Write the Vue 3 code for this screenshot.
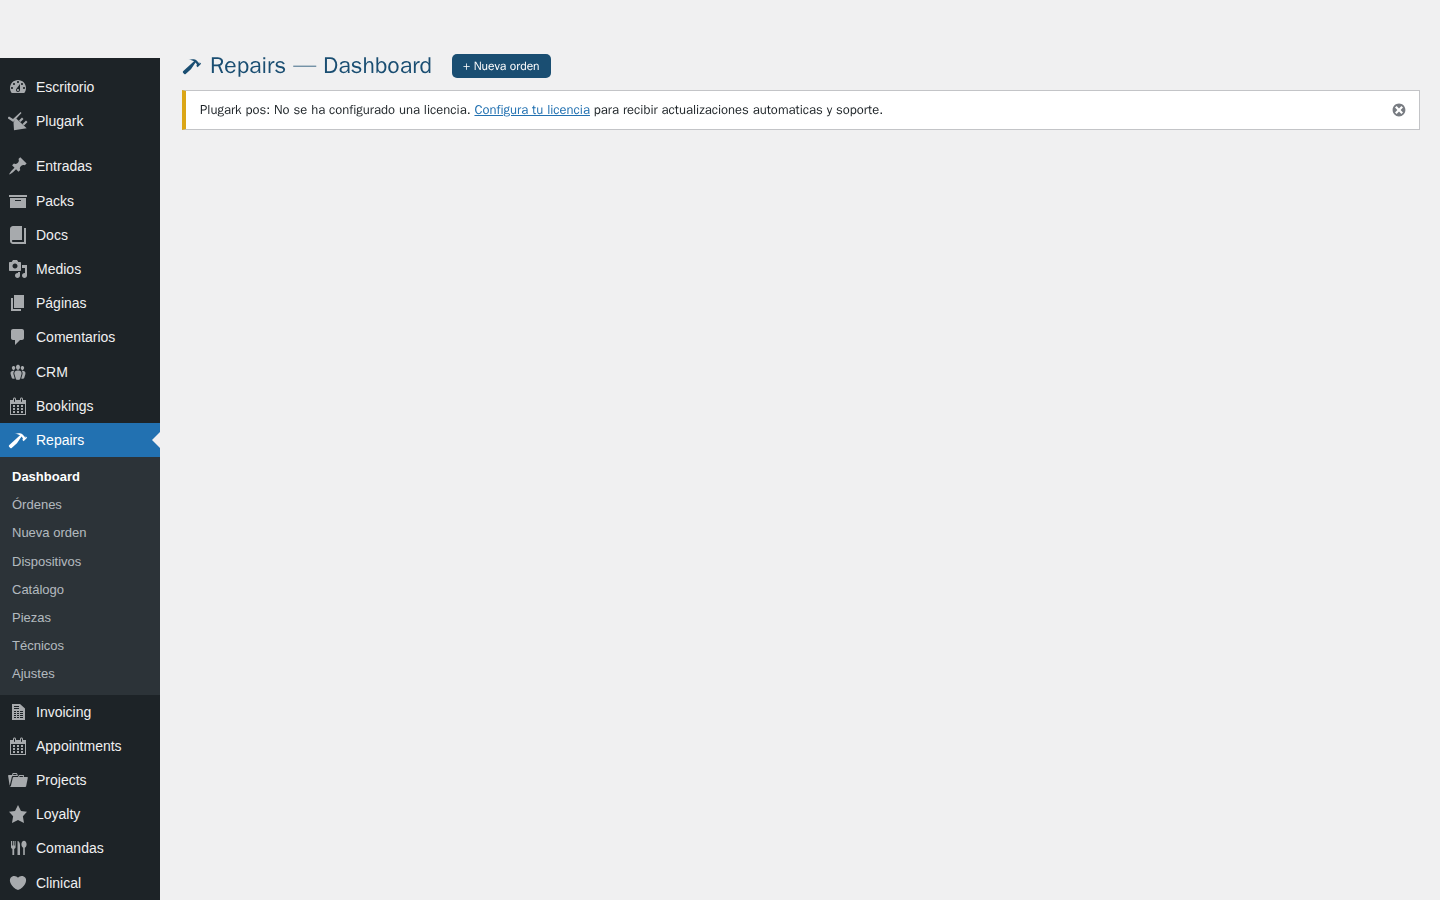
<script setup>
const P = {
  dash: 'M3.76 16h12.48c1.1-1.37 1.76-3.11 1.76-5 0-4.42-3.58-8-8-8s-8 3.58-8 8c0 1.89.66 3.63 1.76 5zM10 4c.55 0 1 .45 1 1s-.45 1-1 1-1-.45-1-1 .45-1 1-1zM6 6c.55 0 1 .45 1 1s-.45 1-1 1-1-.45-1-1 .45-1 1-1zm8 0c.55 0 1 .45 1 1s-.45 1-1 1-1-.45-1-1 .45-1 1-1zm-5.37 5.55L12 7v6c0 1.1-.9 2-2 2s-2-.9-2-2c0-.57.24-1.08.63-1.45zM4 10c.55 0 1 .45 1 1s-.45 1-1 1-1-.45-1-1 .45-1 1-1zm12 0c.55 0 1 .45 1 1s-.45 1-1 1-1-.45-1-1 .45-1 1-1zm-5 3c0-.55-.45-1-1-1s-1 .45-1 1 .45 1 1 1 1-.45 1-1z',
  plug: 'M0 6.500l1-1 4 2.600L12.600 1l.9.900-8.300 9.200L0 7.500zM8 7.300L18.700 17.300 6 19.300 5.500 11.500zM11 9.500l3-3 1.500 1.500-3 3zM14.500 13l3.500-3.500 1.500 1.500-3.500 3.500z',
  pin: 'M10.44 3.02l1.82-1.82 6.36 6.35-1.83 1.82c-1.05-.68-2.48-.57-3.41.36l-.75.75c-.92.93-1.04 2.35-.35 3.41l-1.83 1.82-2.41-2.41-2.8 2.79c-.42.42-3.38 2.71-3.8 2.29s1.86-3.39 2.28-3.81l2.79-2.79L4.1 9.36l1.83-1.82c1.05.69 2.48.57 3.4-.36l.75-.75c.93-.92 1.05-2.35.36-3.41z',
  archive: 'M19 4v2H1V4h18zM2 7h16v10H2V7zm11 3V9H7v1h6z',
  book: 'M16 3h2v16H5c-1.66 0-3-1.34-3-3V4c0-1.66 1.34-3 3-3h9v14H5c-.55 0-1 .45-1 1s.45 1 1 1h11V3z',
  media: 'M13 11V4c0-.55-.45-1-1-1h-1.67L9 1H5L3.67 3H2c-.55 0-1 .45-1 1v7c0 .55.45 1 1 1h10c.55 0 1-.45 1-1zM7 4.5c1.38 0 2.5 1.12 2.5 2.5S8.38 9.5 7 9.5 4.5 8.38 4.5 7 5.62 4.5 7 4.5zM14 6h5v10.5c0 1.38-1.12 2.5-2.5 2.5S14 17.88 14 16.5s1.12-2.5 2.5-2.5c.17 0 .34.02.5.05V9h-3V6zm-4 8.05V13h2v3.5c0 1.38-1.12 2.5-2.5 2.5S7 17.88 7 16.5 8.12 14 9.5 14c.17 0 .34.02.5.05z',
  page: 'M6 15V2h10v13H6zm-1 1h8v2H3V5h2v11z',
  comment: 'M5 2h9c1.1 0 2 .9 2 2v7c0 1.1-.9 2-2 2h-2l-5 5v-5H5c-1.1 0-2-.9-2-2V4c0-1.1.9-2 2-2z',
  groups: 'M8.03 4.46c-.29 1.28.55 3.46 1.97 3.46 1.41 0 2.25-2.18 1.96-3.46-.22-.98-1.08-1.63-1.96-1.63-.89 0-1.74.65-1.97 1.63zm-4.13.9c-.25 1.08.47 2.93 1.67 2.93s1.92-1.85 1.67-2.93c-.19-.83-.92-1.39-1.67-1.39s-1.48.56-1.67 1.39zm8.86 0c-.25 1.08.47 2.93 1.66 2.93 1.2 0 1.92-1.85 1.67-2.93-.19-.83-.92-1.39-1.67-1.39-.74 0-1.47.56-1.66 1.39zm-.59 11.43l1.25-4.3C14.2 10 12.71 8.47 10 8.47c-2.72 0-4.21 1.53-3.44 4.02l1.26 4.3C8.05 17.51 9 18 10 18c.98 0 1.94-.49 2.17-1.21zm-6.1-7.63c-.49.67-.96 1.83-.42 3.59l1.12 3.79c-.34.2-.77.31-1.2.31-.85 0-1.65-.41-1.85-1.03l-1.07-3.65c-.65-2.11.61-3.4 2.92-3.4.27 0 .54.02.79.06-.1.1-.2.22-.29.33zm8.35-.39c2.31 0 3.58 1.29 2.92 3.4l-1.07 3.65c-.2.62-1 1.03-1.85 1.03-.43 0-.86-.11-1.2-.31l1.11-3.79c.55-1.76.08-2.92-.42-3.59-.09-.11-.19-.23-.29-.33.25-.04.51-.06.8-.06z',
  cal: 'M15 4h3v15H2V4h3V3c0-.41.15-.76.44-1.06.29-.29.65-.44 1.06-.44s.77.15 1.06.44c.29.3.44.65.44 1.06v1h4V3c0-.41.15-.76.44-1.06.29-.29.65-.44 1.06-.44s.77.15 1.06.44c.29.3.44.65.44 1.06v1zM6 3v2.5c0 .14.05.26.15.36.09.09.21.14.35.14s.26-.05.35-.14c.1-.1.15-.22.15-.36V3c0-.14-.05-.26-.15-.35-.09-.1-.21-.15-.35-.15s-.26.05-.35.15c-.1.09-.15.21-.15.35zm7 0v2.5c0 .14.05.26.14.36.1.09.22.14.36.14s.26-.05.36-.14c.09-.1.14-.22.14-.36V3c0-.14-.05-.26-.14-.35-.1-.1-.22-.15-.36-.15s-.26.05-.36.15c-.09.09-.14.21-.14.35zm4 15V8H3v10h14zM7 9v2H5V9h2zm2 0h2v2H9V9zm4 2V9h2v2h-2zm-6 1v2H5v-2h2zm2 0h2v2H9v-2zm4 2v-2h2v2h-2zm-6 1v2H5v-2h2zm4 2H9v-2h2v2zm4 0h-2v-2h2v2z',
  hammer: 'M17.7 6.32l1.41 1.42-3.47 3.41-1.42-1.42.84-.82c-.32-.76-.81-1.57-1.51-2.31l-4.61 6.59-5.26 4.7c-.39.39-1.02.39-1.42 0l-1.2-1.21c-.39-.39-.39-1.02 0-1.41l10.97-9.92c-1.37-.86-3.21-1.46-5.67-1.48 2.7-.82 4.95-.93 6.58-.3 1.7.66 2.82 2.06 3.52 3.05.34.47.71.91.95 1.46z',
  doc: 'M12 2l5 4.500V18H4V2h8zM6 4v1h5V4zM6 6v1h5V6zM6 9v1h2V9zM9 9v1h2V9zM12 9v1h3V9zM6 11v1h2v-1zM9 11v1h2v-1zM12 11v1h3v-1zM6 13v1h2v-1zM9 13v1h2v-1zM12 13v1h3v-1zM6 15v1h2v-1zM9 15v1h2v-1zM12 15v1h3v-1z',
  folder: 'M4 5H.78c-.37 0-.74.32-.69.84l1.56 9.99S3.5 8.47 3.86 6.7c.11-.53.61-.7.98-.7H10s-.7-2.08-.77-2.31C9.11 3.25 8.89 3 8.45 3H5.14c-.36 0-.7.23-.8.64C4.25 4.04 4 5 4 5zm4.88 0h-4s.42-1 .87-1h2.13c.48 0 1 1 1 1zM2.67 16.25c-.31.47-.76.75-1.26.75h15.73c.54 0 .92-.31 1.03-.83.44-2.19 1.68-8.44 1.68-8.44.07-.5-.3-.73-.62-.73H16V5.53c0-.16-.26-.53-.66-.53h-3.76c-.52 0-.87.58-.87.58L10 7H5.59c-.32 0-.63.19-.69.5 0 0-1.59 6.7-1.72 7.33-.07.37-.22.99-.51 1.42zM15.38 7H11s.58-1 1.13-1h2.29c.71 0 .96 1 .96 1z',
  star: 'M10 1l3 6 6 .75-4.12 4.62L16 19l-6-3-6 3 1.13-6.63L1 7.75 7 7z',
  food: 'M3 3h1v4.500h.800V3h1v4.500h.800V3h1v6c0 .900-.6 1.600-1.400 1.900V17H4.400v-6.100C3.600 10.600 3 9.900 3 9V3zM9.500 3c1.500 0 2.500 1.800 2.500 4v10H9.500V3zM16 2.800c1.400 0 2.600 1.600 2.600 3.500 0 1.600-.8 3-1.800 3.400V17h-1.600V9.700c-1-.4-1.800-1.800-1.800-3.400 0-1.900 1.200-3.500 2.600-3.500z',
  heart: 'M10 17.120c3.330-1.400 5.740-3.790 7.040-6.210 1.280-2.410 1.460-4.810.32-6.250-1.030-1.290-2.370-1.780-3.730-1.740s-2.680.63-3.630 1.820c-.95-1.190-2.270-1.780-3.630-1.820s-2.700.45-3.730 1.740c-1.140 1.440-.96 3.840.34 6.250 1.280 2.420 3.690 4.810 7.020 6.210z',
  dismiss: 'M10 2c4.420 0 8 3.580 8 8s-3.580 8-8 8-8-3.580-8-8 3.580-8 8-8zm5 11l-3-3 3-3-2-2-3 3-3-3-2 2 3 3-3 3 2 2 3-3 3 3z'
}

const topMenu = [
  { label: 'Escritorio', icon: P.dash },
  { label: 'Plugark', icon: P.plug }
]
const midMenu = [
  { label: 'Entradas', icon: P.pin },
  { label: 'Packs', icon: P.archive },
  { label: 'Docs', icon: P.book },
  { label: 'Medios', icon: P.media },
  { label: 'Páginas', icon: P.page },
  { label: 'Comentarios', icon: P.comment },
  { label: 'CRM', icon: P.groups },
  { label: 'Bookings', icon: P.cal }
]
const subMenu = ['Dashboard', 'Órdenes', 'Nueva orden', 'Dispositivos', 'Catálogo', 'Piezas', 'Técnicos', 'Ajustes']
const endMenu = [
  { label: 'Invoicing', icon: P.doc },
  { label: 'Appointments', icon: P.cal },
  { label: 'Projects', icon: P.folder },
  { label: 'Loyalty', icon: P.star },
  { label: 'Comandas', icon: P.food },
  { label: 'Clinical', icon: P.heart }
]
</script>

<template>
  <div class="page">
    <aside class="sidebar">
      <ul class="menu">
        <li v-for="item in topMenu" :key="item.label" class="item">
          <svg class="icon" viewBox="0 0 20 20"><path :d="item.icon" /></svg>
          <span>{{ item.label }}</span>
        </li>
        <li class="separator"></li>
        <li v-for="item in midMenu" :key="item.label" class="item">
          <svg class="icon" viewBox="0 0 20 20"><path :d="item.icon" /></svg>
          <span>{{ item.label }}</span>
        </li>
        <li class="item active">
          <svg class="icon" viewBox="0 0 20 20"><path :d="P.hammer" /></svg>
          <span>Repairs</span>
        </li>
        <li class="submenu">
          <a v-for="(s, i) in subMenu" :key="s" class="subitem" :class="{ current: i === 0 }">{{ s }}</a>
        </li>
        <li v-for="item in endMenu" :key="item.label" class="item">
          <svg class="icon" viewBox="0 0 20 20"><path :d="item.icon" /></svg>
          <span>{{ item.label }}</span>
        </li>
      </ul>
    </aside>
    <main class="main">
      <header class="head">
        <h1 class="title">
          <svg class="title-icon" viewBox="0 0 20 20"><path :d="P.hammer" /></svg>
          <span>Repairs — Dashboard</span>
        </h1>
        <a class="btn">+ Nueva orden</a>
      </header>
      <div class="notice">
        <p>Plugark pos: No se ha configurado una licencia. <a class="link">Configura tu licencia</a> para recibir actualizaciones automaticas y soporte.</p>
        <svg class="dismiss" viewBox="0 0 20 20"><path :d="P.dismiss" /></svg>
      </div>
    </main>
  </div>
</template>

<style>
html, body { margin: 0; background: #f0f0f1; }
</style>

<style scoped>
.page {
  display: grid;
  grid-template-columns: 160px 1fr;
  height: 900px;
  overflow: hidden;
  background: #f0f0f1;
}
.sidebar {
  margin-top: 58px;
  background: #1d2327;
  overflow: hidden;
  font-family: "Liberation Sans", Arial, sans-serif;
}
.menu { list-style: none; margin: 12px 0; padding: 0; }
.item {
  position: relative;
  display: flex;
  align-items: center;
  height: 34.2px;
  color: #f0f0f1;
  font-size: 14px;
}
.item span { margin-left: 8px; }
.icon { width: 20px; height: 20px; margin-left: 8px; fill: #a7aaad; flex: none; }
.separator { height: 5px; margin-bottom: 6px; }
.active { background: #2271b1; color: #fff; }
.active .icon { fill: #fff; }
.active::after {
  content: "";
  position: absolute;
  right: 0;
  top: 50%;
  margin-top: -8px;
  border: 8px solid transparent;
  border-right-color: #f0f0f1;
}
.submenu { background: #2c3338; padding: 6px 0 5.9px; }
.subitem {
  display: block;
  padding: 5px 12px;
  font-size: 13px;
  line-height: 18.2px;
  color: rgba(240, 246, 252, 0.7);
}
.current { color: #fff; font-weight: 600; }
.main {
  padding: 54px 20px 0 22px;
  font-family: "WenQuanYi Zen Hei", "Noto Sans", sans-serif;
}
.head { display: flex; align-items: center; height: 24px; }
.title {
  display: flex;
  align-items: center;
  gap: 8px;
  margin: 0 20px 0 0;
  font-size: 23px;
  font-weight: 400;
  line-height: 24px;
  color: #1a4e72;
}
.title-icon { width: 20px; height: 20px; fill: #1a4e72; }
.btn {
  display: block;
  height: 24px;
  line-height: 24px;
  padding: 0 11px;
  border-radius: 5px;
  background: #1a4e72;
  color: #fff;
  font-size: 12px;
}
.notice {
  display: flex;
  align-items: center;
  justify-content: space-between;
  box-sizing: border-box;
  height: 40px;
  margin-top: 12px;
  padding: 0 12px 0 14px;
  background: #fff;
  border: 1px solid #c3c4c7;
  border-left: 4px solid #dba617;
  color: #1d2327;
  font-size: 13px;
}
.notice p { margin: 0; }
.link { color: #2271b1; text-decoration: underline; }
.dismiss { width: 16px; height: 16px; fill: #787c82; }
</style>
